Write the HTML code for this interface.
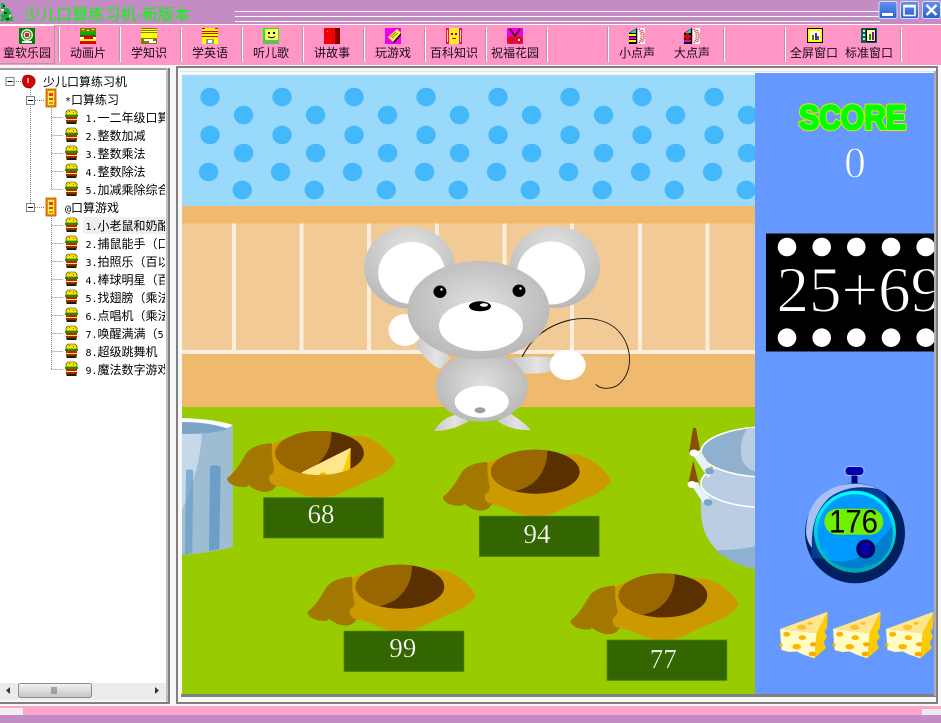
<!DOCTYPE html>
<html><head><meta charset="utf-8"><title>少儿口算练习机</title>
<style>
html,body{margin:0;padding:0;width:941px;height:723px;overflow:hidden;background:#f0f0f0}
svg{display:block;position:absolute;left:0;top:0}
.cj{font-family:"Liberation Sans","WenQuanYi Zen Hei","Noto Sans CJK SC",sans-serif;font-size:12px;fill:#000}
.tb{text-anchor:middle;fill:#1a0a1a}
.m{font-family:"DejaVu Sans Mono","Liberation Mono",monospace;font-size:10px}
.se{font-family:"Liberation Serif",serif;fill:#fff}
</style></head><body>
<svg width="941" height="723" viewBox="0 0 941 723" xmlns="http://www.w3.org/2000/svg">
<defs>
<radialGradient id="g1" cx="50%" cy="30%" r="70%"><stop offset="0" stop-color="#e4e4e4"/><stop offset="1" stop-color="#b8b8b8"/></radialGradient>
<radialGradient id="g2" cx="50%" cy="45%" r="62%"><stop offset="0" stop-color="#e0e0e0"/><stop offset="1" stop-color="#b4b4b4"/></radialGradient>
<linearGradient id="g3" x1="0" y1="0" x2="1" y2="0"><stop offset="0" stop-color="#c8c8c8"/><stop offset=".6" stop-color="#e4e4e4"/><stop offset="1" stop-color="#cccccc"/></linearGradient>
<linearGradient id="gb" x1="0" y1="0" x2="0" y2="1"><stop offset="0" stop-color="#5f93ec"/><stop offset="1" stop-color="#2a5fd0"/></linearGradient>
<linearGradient id="gs" x1="0" y1="0" x2="0" y2="1"><stop offset="0" stop-color="#f4f4f4"/><stop offset="1" stop-color="#c4c4c4"/></linearGradient>
<linearGradient id="gc" x1="0" y1="0" x2="0" y2="1"><stop offset="0" stop-color="#00ffff"/><stop offset="1" stop-color="#00a8a8"/></linearGradient>
<clipPath id="gameclip"><rect x="182" y="73" width="573" height="621"/></clipPath>
<clipPath id="rightclip"><rect x="755" y="73" width="179" height="621"/></clipPath>
<clipPath id="treeclip"><rect x="0" y="70" width="165" height="612"/></clipPath>
<clipPath id="holeE"><ellipse cx="56.3" cy="-44.3" rx="44.3" ry="22"/></clipPath>
<clipPath id="cheeseHole"><ellipse cx="319.6" cy="453" rx="44.3" ry="22"/></clipPath>

<g id="hole">
<path d="M-36-19.3C-30-24-25-30-17-44.3C-10-52-2-53 8-54.3L20-20L9.7-7.7C3-3-8-6-15.3-12.7C-15-10-18-10-22-10.3C-28-10.5-37-14-36-19.3Z" fill="#a37800"/>
<path d="M8.7-52.7C25-62 50-66 72-63C85-61 93-62 99.7-61C115-57 127-45 132.3-35.7C127-26 115-20 103-16C90-10 80-5 69.7-1C60 0 55 1 49.7-.3C42-1 38-3 33-5C25-10 15-11 9.7-12.7C5-15 5-22 8-23C10-24 10.7-27 10.7-29.3C9-36 8-45 8.7-52.7Z" fill="#cc9900"/>
<ellipse cx="56.3" cy="-44.3" rx="44.3" ry="22" fill="#5a3000"/>
<path clip-path="url(#holeE)" d="M0-70H68C70-50 60-30 36.3-25L0-20Z" fill="#996600"/>
</g>

<g id="burger">
<path d="M3 1h7l2 2v3H1V3z" fill="#ffe000" stroke="#303000" stroke-width=".6"/>
<rect x="0" y="6" width="13" height="2" fill="#00a000"/>
<rect x="1" y="8" width="11" height="2" fill="#e01010"/>
<rect x="1" y="10" width="11" height="1" fill="#fff060"/>
<rect x="1" y="11" width="11" height="2" fill="#903000"/>
<path d="M2 13h9l1 1-1 1H2L1 14z" fill="#202000"/>
<rect x="4" y="2" width="1" height="1" fill="#806000"/><rect x="8" y="3" width="1" height="1" fill="#806000"/>
</g>

<g id="folder">
<rect x="0" y="0" width="10" height="18" fill="#ff8800" stroke="#905000" stroke-width=".7"/>
<rect x="2" y="2" width="6" height="14" fill="#ffee50"/>
<rect x="3" y="4" width="4" height="3" fill="#e04020"/>
<rect x="3" y="9" width="4" height="2" fill="#e04020"/>
<rect x="3" y="13" width="4" height="2" fill="#d0a000"/>
</g>

<g id="minus"><rect x=".5" y=".5" width="8" height="8" fill="#fff" stroke="#808080"/><rect x="2" y="4" width="5" height="1" fill="#000"/></g>

<g id="cheese">
<path d="M780 629L827.7 611.7L816.7 633.3Z" fill="#ffe68a"/>
<path d="M780 629L816.7 633.3L814.3 658.3L803 654.5L797 651.5L789 652L781.5 650Z" fill="#fffcc4"/>
<path d="M827.7 611.7L816.7 633.3L814.3 658.3L826 648L823.5 642L827 637L824.5 631.5L827 628Z" fill="#ffcc00"/>
<ellipse cx="801.7" cy="627.3" rx="4.7" ry="2.7" fill="#ffc030"/>
<ellipse cx="810" cy="623.3" rx="2.7" ry="1.5" fill="#ffc030"/>
<ellipse cx="786.7" cy="634.3" rx="3.5" ry="2.4" fill="#ffb400"/>
<ellipse cx="802.3" cy="637.7" rx="3.7" ry="2.4" fill="#ffb400"/>
<ellipse cx="796.7" cy="646.7" rx="4.3" ry="2.7" fill="#ffb400"/>
<ellipse cx="813.3" cy="644.3" rx="3.4" ry="2.1" fill="#ffa800"/>
<ellipse cx="812.3" cy="654" rx="3.7" ry="2.4" fill="#ffa800"/>
<ellipse cx="781" cy="645" rx="1.5" ry="2" fill="#ffb400"/>
</g>
</defs>

<!-- title bar -->
<rect x="0" y="0" width="941" height="25" fill="#c48cc4"/>
<rect x="235" y="11" width="645" height="1" fill="#fff"/>
<rect x="235" y="16" width="645" height="1" fill="#fff"/>
<rect x="235" y="21" width="645" height="1" fill="#fff"/>
<rect x="0" y="24" width="941" height="1" fill="#fff"/>
<!-- dragon icon -->
<path d="M1 3h3l1 5h3l2 3 2 2-2 1 3 3-1 3 2 1H9l-2 1-3-2-2 2-2-2 2-2-2-3 3-1 1-3-3-2z" fill="#19b040"/>
<path d="M3 5h2v2H3zM4 12h3v2H4zM6 18h3v2H6z" fill="#003a10"/>
<path d="M1 9h3v2H1zM9 15h2v2H9z" fill="#c8f0c8"/>
<text x="24" y="20" font-family="'Liberation Sans','WenQuanYi Zen Hei','Noto Sans CJK SC',sans-serif" font-size="16" fill="#00ff00" textLength="166">少儿口算练习机-新版本</text>
<!-- window buttons -->
<g>
<rect x="879" y="1.5" width="18" height="17" rx="2" fill="url(#gb)" stroke="#cfe0ff"/>
<rect x="882" y="13" width="11" height="3" fill="#fff"/>
<rect x="900.5" y="1.5" width="18" height="17" rx="2" fill="url(#gb)" stroke="#cfe0ff"/>
<rect x="904" y="5.5" width="11" height="10" fill="none" stroke="#fff" stroke-width="1.6"/><rect x="904" y="5" width="11" height="2.5" fill="#fff"/>
<rect x="922.5" y="1.5" width="18" height="17" rx="2" fill="url(#gb)" stroke="#cfe0ff"/>
<path d="M926.5 5L936.5 15M936.5 5L926.5 15" stroke="#fff" stroke-width="2.4"/>
</g>

<!-- toolbar -->
<rect x="0" y="25" width="941" height="41" fill="#ff96c6"/>
<path d="M0 25.500H54.500V63.500H0" fill="none" stroke="#a0a0a0"/>
<rect x="0" y="25" width="54" height="1" fill="#fff"/>
<g fill="#fff">
<rect x="59" y="27" width="1" height="35"/><rect x="120" y="27" width="1" height="35"/><rect x="181" y="27" width="1" height="35"/><rect x="242" y="27" width="1" height="35"/><rect x="303" y="27" width="1" height="35"/><rect x="364" y="27" width="1" height="35"/><rect x="425" y="27" width="1" height="35"/><rect x="486" y="27" width="1" height="35"/><rect x="547" y="27" width="1" height="35"/><rect x="608" y="27" width="1" height="35"/><rect x="724" y="27" width="1" height="35"/><rect x="785" y="27" width="1" height="35"/><rect x="901" y="27" width="1" height="35"/>
</g>
<g fill="#a8a0a8">
<rect x="58" y="27" width="1" height="35"/><rect x="119" y="27" width="1" height="35"/><rect x="180" y="27" width="1" height="35"/><rect x="241" y="27" width="1" height="35"/><rect x="302" y="27" width="1" height="35"/><rect x="363" y="27" width="1" height="35"/><rect x="424" y="27" width="1" height="35"/><rect x="485" y="27" width="1" height="35"/><rect x="546" y="27" width="1" height="35"/><rect x="607" y="27" width="1" height="35"/><rect x="723" y="27" width="1" height="35"/><rect x="784" y="27" width="1" height="35"/><rect x="900" y="27" width="1" height="35"/>
</g>

<!-- toolbar icons -->
<g transform="translate(19,28)"><rect width="16" height="16" fill="#008000"/><circle cx="8" cy="7" r="6" fill="#e8f0e8"/><circle cx="8" cy="7" r="4" fill="none" stroke="#008000"/><rect x="6" y="5" width="4" height="4" fill="#e02020"/><rect x="3" y="13" width="10" height="2" fill="#fff"/></g>
<g transform="translate(80,28)"><rect width="16" height="4" fill="#808000"/><rect x="2" y="1" width="2" height="1" fill="#ffff00"/><rect x="7" y="2" width="2" height="1" fill="#ffff00"/><rect x="12" y="1" width="2" height="1" fill="#ffff00"/><rect y="4" width="16" height="3" fill="#00b000"/><rect y="7" width="16" height="2" fill="#804000"/><rect y="9" width="16" height="2" fill="#ffffff"/><rect x="4" y="8" width="9" height="3" fill="#e00000"/><rect y="11" width="16" height="2" fill="#ffff00"/><rect y="13" width="16" height="3" fill="#e00000"/></g>
<g transform="translate(141,28)"><rect width="16" height="5" fill="#808000"/><rect y="1" width="16" height="1" fill="#ffff00"/><rect y="3" width="16" height="1" fill="#ffff60"/><rect y="5" width="16" height="5" fill="#ffff00"/><rect y="10" width="16" height="6" fill="#808000"/><rect x="3" y="11" width="9" height="2" fill="#fff"/><rect x="8" y="13" width="7" height="2" fill="#fff"/></g>
<g transform="translate(202,28)"><rect width="16" height="16" fill="#ffff00"/><rect y="3" width="16" height="1" fill="#e00000"/><rect y="5" width="16" height="1" fill="#e00000"/><rect y="8" width="16" height="1" fill="#e00000"/><rect x="0" y="0" width="3" height="1" fill="#e00000"/><rect x="13" y="0" width="3" height="1" fill="#e00000"/><rect x="4" y="11" width="8" height="5" fill="#80a080"/><rect x="6" y="12" width="4" height="3" fill="#fff"/></g>
<g transform="translate(263,28)"><rect width="16" height="12" fill="#00ff00"/><rect x="2" y="1" width="13" height="11" fill="#ffff60"/><rect x="5" y="4" width="2" height="2" fill="#000"/><rect x="10" y="4" width="2" height="2" fill="#000"/><path d="M5 8.500Q8.500 11 12 8.500" stroke="#000" fill="none"/><rect y="12" width="16" height="4" fill="#60c060"/></g>
<g transform="translate(324,28)"><rect width="16" height="16" fill="#f00000"/><rect x="11" width="5" height="16" fill="#800000"/><rect x="3" y="3" width="1" height="1" fill="#ffa0a0"/></g>
<g transform="translate(385,28)"><rect width="16" height="16" fill="#f000f0"/><path d="M3 9L12 1L16 5L8 14Z" fill="#ffff40"/><path d="M5 9L11 4M7 10L13 5" stroke="#808000"/><path d="M8 14L16 5V7L9 15Z" fill="#000"/></g>
<g transform="translate(446,28)"><rect width="16" height="16" fill="#f000a0"/><rect x="3" width="10" height="16" fill="#ffee20"/><rect x="5" y="5" width="2" height="2" fill="#a00000"/><rect x="9" y="5" width="2" height="2" fill="#a00000"/><rect x="6" y="10" width="4" height="1" fill="#e00000"/><rect x="1" y="2" width="1" height="12" fill="#ffee20"/><rect x="14" y="2" width="1" height="12" fill="#ffee20"/></g>
<g transform="translate(507,28)"><rect width="16" height="16" fill="#f000f0"/><circle cx="4" cy="12" r="4" fill="#e01010"/><circle cx="12" cy="12" r="4" fill="#e01010"/><path d="M3 1L8 8L13 1" stroke="#600000" stroke-width="2" fill="none"/><rect x="11" y="11" width="2" height="2" fill="#fff"/></g>
<g transform="translate(629,28)"><path d="M0 5L8 0V16H0Z" fill="#000"/><path d="M1 5L7 1V5Z" fill="#00e0e0"/><rect x="0" y="6" width="7" height="2" fill="#ffff00"/><rect x="0" y="9" width="7" height="2" fill="#e000e0"/><rect x="0" y="12" width="7" height="2" fill="#ffff00"/><rect x="9" width="7" height="16" fill="#fff"/><path d="M10 1Q15 8 10 15M13 2Q17 8 13 14" stroke="#d03030" stroke-dasharray="1 1" stroke-width="2" fill="none"/></g>
<g transform="translate(684,28)"><path d="M0 5L8 0V16H0Z" fill="#000"/><path d="M1 5L7 1V5Z" fill="#00e0e0"/><rect x="0" y="7" width="7" height="3" fill="#e00000"/><rect x="2" y="5" width="3" height="7" fill="#e00000"/><rect x="0" y="12" width="7" height="2" fill="#e000e0"/><rect x="9" width="7" height="16" fill="#fff"/><path d="M10 1Q15 8 10 15M13 2Q17 8 13 14" stroke="#d03030" stroke-dasharray="1 1" stroke-width="2" fill="none"/></g>
<g transform="translate(807,28)"><rect width="16" height="15" fill="#000"/><rect x="1" y="1" width="14" height="13" fill="#ffff00"/><rect x="3" y="3" width="10" height="9" fill="#fff"/><rect x="5" y="7" width="2" height="5" fill="#00a000"/><rect x="8" y="5" width="2" height="7" fill="#a000a0"/><rect x="10" y="8" width="2" height="4" fill="#008080"/></g>
<g transform="translate(861,28)"><rect width="16" height="15" fill="#006080"/><rect x="2" y="2" width="2" height="2" fill="#ffff00"/><rect x="2" y="6" width="2" height="2" fill="#ffff00"/><rect x="2" y="10" width="2" height="2" fill="#ffff00"/><rect x="5" y="1" width="10" height="13" fill="#000"/><rect x="6" y="2" width="8" height="11" fill="#ffffa0"/><rect x="8" y="6" width="2" height="6" fill="#00a000"/><rect x="11" y="4" width="2" height="8" fill="#a000a0"/></g>

<g class="cj">
<text class="cj tb" x="27" y="57">童软乐园</text>
<text class="cj tb" x="88" y="57">动画片</text>
<text class="cj tb" x="149" y="57">学知识</text>
<text class="cj tb" x="210" y="57">学英语</text>
<text class="cj tb" x="271" y="57">听儿歌</text>
<text class="cj tb" x="332" y="57">讲故事</text>
<text class="cj tb" x="393" y="57">玩游戏</text>
<text class="cj tb" x="454" y="57">百科知识</text>
<text class="cj tb" x="515" y="57">祝福花园</text>
<text class="cj tb" x="637" y="57">小点声</text>
<text class="cj tb" x="692" y="57">大点声</text>
<text class="cj tb" x="814" y="57">全屏窗口</text>
<text class="cj tb" x="869" y="57">标准窗口</text>
</g>

<!-- panels base -->
<rect x="0" y="65" width="941" height="641" fill="#f6f6f6"/>
<!-- left tree panel -->
<rect x="0" y="70" width="166" height="613" fill="#fff"/>
<rect x="0" y="68" width="170" height="2" fill="#a0a0a0"/>
<rect x="166" y="68" width="2" height="634" fill="#c0c0c0"/>
<rect x="168" y="68" width="2" height="636" fill="#808080"/>
<rect x="0" y="702" width="170" height="2" fill="#808080"/>
<!-- scrollbar -->
<rect x="0" y="683" width="166" height="17" fill="#ececec"/>
<rect x="18.500" y="683.500" width="73" height="14" rx="2" fill="url(#gs)" stroke="#8c8c8c"/>
<path d="M52 687v7M54 687v7M56 687v7" stroke="#666"/>
<path d="M10 687V694L6 690.500Z" fill="#333"/>
<path d="M155 687V694L159 690.500Z" fill="#333"/>

<!-- right panel frame -->
<rect x="177" y="67" width="760" height="636" fill="#f8f8f8" stroke="#808080" stroke-width="2"/>
<rect x="180" y="71" width="755" height="1" fill="#e4e4e4"/>
<rect x="181" y="694" width="755" height="3" fill="#808080"/>
<rect x="934" y="71" width="2" height="625" fill="#b0b0b0"/>

<!-- tree lines -->
<g stroke="#808080" stroke-dasharray="1 1" fill="none">
<path d="M30.500 88V203M14 81.500H22M35 100.500H44M35 207.500H44"/>
<path d="M51.500 108V189.500M51.500 117.500H63M51.500 135.500H63M51.500 153.500H63M51.500 171.500H63M51.500 189.500H63"/>
<path d="M51.500 216V369.500M51.500 225.500H63M51.500 243.500H63M51.500 261.500H63M51.500 279.500H63M51.500 297.500H63M51.500 315.500H63M51.500 333.500H63M51.500 351.500H63M51.500 369.500H63"/>
</g>
<use href="#minus" x="5.500" y="77"/>
<use href="#minus" x="26" y="96"/>
<use href="#minus" x="26" y="203"/>
<!-- apple -->
<path d="M24 76Q28 74 32 76Q36 78 35 83Q33 88 29 88Q24 88 22.500 83Q22 78 24 76Z" fill="#d80000" stroke="#400000" stroke-width=".5"/>
<rect x="27" y="78" width="2" height="5" fill="#ffa0a0"/>
<use href="#folder" x="46" y="89"/>
<use href="#folder" x="46" y="198"/>
<use href="#burger" x="65" y="109"/><use href="#burger" x="65" y="127"/><use href="#burger" x="65" y="145"/><use href="#burger" x="65" y="163"/><use href="#burger" x="65" y="181"/>
<use href="#burger" x="65" y="217"/><use href="#burger" x="65" y="235"/><use href="#burger" x="65" y="253"/><use href="#burger" x="65" y="271"/><use href="#burger" x="65" y="289"/><use href="#burger" x="65" y="307"/><use href="#burger" x="65" y="325"/><use href="#burger" x="65" y="343"/><use href="#burger" x="65" y="361"/>
<rect x="83" y="217" width="82" height="17" fill="#f0f0f0"/>
<g clip-path="url(#treeclip)">
<text class="cj" x="43" y="86">少儿口算练习机</text>
<text class="cj" x="65" y="104"><tspan class="m">*</tspan>口算练习</text>
<text class="cj" x="85.500" y="122"><tspan class="m">1.</tspan>一二年级口算</text>
<text class="cj" x="85.500" y="140"><tspan class="m">2.</tspan>整数加减</text>
<text class="cj" x="85.500" y="158"><tspan class="m">3.</tspan>整数乘法</text>
<text class="cj" x="85.500" y="176"><tspan class="m">4.</tspan>整数除法</text>
<text class="cj" x="85.500" y="194"><tspan class="m">5.</tspan>加减乘除综合</text>
<text class="cj" x="65" y="212"><tspan class="m">@</tspan>口算游戏</text>
<text class="cj" x="85.500" y="230"><tspan class="m">1.</tspan>小老鼠和奶酪</text>
<text class="cj" x="85.500" y="248"><tspan class="m">2.</tspan>捕鼠能手（口算</text>
<text class="cj" x="85.500" y="266"><tspan class="m">3.</tspan>拍照乐（百以内</text>
<text class="cj" x="85.500" y="284"><tspan class="m">4.</tspan>棒球明星（百以</text>
<text class="cj" x="85.500" y="302"><tspan class="m">5.</tspan>找翅膀（乘法</text>
<text class="cj" x="85.500" y="320"><tspan class="m">6.</tspan>点唱机（乘法</text>
<text class="cj" x="85.500" y="338"><tspan class="m">7.</tspan>唤醒满满（<tspan class="m">5</tspan></text>
<text class="cj" x="85.500" y="356"><tspan class="m">8.</tspan>超级跳舞机</text>
<text class="cj" x="85.500" y="374"><tspan class="m">9.</tspan>魔法数字游戏</text>
</g>

<!-- game scene -->
<g clip-path="url(#gameclip)">
<rect x="182" y="75" width="573" height="131" fill="#99d9fc"/>
<g fill="#45b8fb">
<ellipse cx="210" cy="97" rx="9.700" ry="9.300"/><ellipse cx="282" cy="97" rx="9.700" ry="9.300"/><ellipse cx="354" cy="97" rx="9.700" ry="9.300"/><ellipse cx="426" cy="97" rx="9.700" ry="9.300"/><ellipse cx="498" cy="97" rx="9.700" ry="9.300"/><ellipse cx="570" cy="97" rx="9.700" ry="9.300"/><ellipse cx="642" cy="97" rx="9.700" ry="9.300"/><ellipse cx="714" cy="97" rx="9.700" ry="9.300"/>
<ellipse cx="243.600" cy="115" rx="9.700" ry="9.300"/><ellipse cx="315.600" cy="115" rx="9.700" ry="9.300"/><ellipse cx="387.600" cy="115" rx="9.700" ry="9.300"/><ellipse cx="459.600" cy="115" rx="9.700" ry="9.300"/><ellipse cx="531.600" cy="115" rx="9.700" ry="9.300"/><ellipse cx="603.600" cy="115" rx="9.700" ry="9.300"/><ellipse cx="675.600" cy="115" rx="9.700" ry="9.300"/><ellipse cx="747.600" cy="115" rx="9.700" ry="9.300"/>
<ellipse cx="210" cy="135" rx="9.700" ry="9.300"/><ellipse cx="282" cy="135" rx="9.700" ry="9.300"/><ellipse cx="354" cy="135" rx="9.700" ry="9.300"/><ellipse cx="426" cy="135" rx="9.700" ry="9.300"/><ellipse cx="498" cy="135" rx="9.700" ry="9.300"/><ellipse cx="570" cy="135" rx="9.700" ry="9.300"/><ellipse cx="642" cy="135" rx="9.700" ry="9.300"/><ellipse cx="714" cy="135" rx="9.700" ry="9.300"/>
<ellipse cx="243.600" cy="153" rx="9.700" ry="9.300"/><ellipse cx="315.600" cy="153" rx="9.700" ry="9.300"/><ellipse cx="387.600" cy="153" rx="9.700" ry="9.300"/><ellipse cx="459.600" cy="153" rx="9.700" ry="9.300"/><ellipse cx="531.600" cy="153" rx="9.700" ry="9.300"/><ellipse cx="603.600" cy="153" rx="9.700" ry="9.300"/><ellipse cx="675.600" cy="153" rx="9.700" ry="9.300"/><ellipse cx="747.600" cy="153" rx="9.700" ry="9.300"/>
<ellipse cx="208.600" cy="172" rx="9.700" ry="9.300"/><ellipse cx="280.600" cy="172" rx="9.700" ry="9.300"/><ellipse cx="352.600" cy="172" rx="9.700" ry="9.300"/><ellipse cx="424.600" cy="172" rx="9.700" ry="9.300"/><ellipse cx="496.600" cy="172" rx="9.700" ry="9.300"/><ellipse cx="568.600" cy="172" rx="9.700" ry="9.300"/><ellipse cx="640.600" cy="172" rx="9.700" ry="9.300"/><ellipse cx="712.600" cy="172" rx="9.700" ry="9.300"/>
<ellipse cx="242.200" cy="190" rx="9.700" ry="9.300"/><ellipse cx="314.200" cy="190" rx="9.700" ry="9.300"/><ellipse cx="386.200" cy="190" rx="9.700" ry="9.300"/><ellipse cx="458.200" cy="190" rx="9.700" ry="9.300"/><ellipse cx="530.200" cy="190" rx="9.700" ry="9.300"/><ellipse cx="602.200" cy="190" rx="9.700" ry="9.300"/><ellipse cx="674.200" cy="190" rx="9.700" ry="9.300"/><ellipse cx="746.200" cy="190" rx="9.700" ry="9.300"/>
</g>
<rect x="182" y="206" width="573" height="17.500" fill="#efba6d"/>
<rect x="182" y="223.500" width="573" height="127" fill="#f2ca95"/>
<g fill="#fdeedd">
<rect x="232" y="223.500" width="4" height="127"/><rect x="299.500" y="223.500" width="4" height="127"/><rect x="367" y="223.500" width="4" height="127"/><rect x="435" y="223.500" width="4" height="127"/><rect x="502.500" y="223.500" width="4" height="127"/><rect x="570" y="223.500" width="4" height="127"/><rect x="638" y="223.500" width="4" height="127"/><rect x="705.500" y="223.500" width="4" height="127"/>
<rect x="182" y="350" width="573" height="4"/>
</g>
<rect x="182" y="354" width="573" height="53" fill="#efba6d"/>
<rect x="182" y="407" width="573" height="287" fill="#99cc00"/>

<!-- bucket -->
<path d="M182 418Q215 419 232.700 425V547Q210 553 182 555Z" fill="#9fbdd2"/>
<path d="M182 433H202Q200 470 182 510Z" fill="#c5d9ea"/>
<path d="M186 470Q193 468 193.300 472L192.300 553L185 555Z" fill="#6b9fc8" opacity=".75"/>
<path d="M210 466Q216 464 220.700 467L219.300 549L209 551Z" fill="#6b9fc8"/>
<path d="M182 418Q215 419 232.700 425Q225 432 182 434Z" fill="#fff"/>
<path d="M182 422Q210 422 228.300 429Q215 434 182 434Z" fill="#7aa4c8"/>

<!-- pots -->
<path d="M701 480V513Q702 540 723 555Q738 565 760 569V480Z" fill="#bbcde2"/>
<path d="M715 550Q735 551 756 546V569Q735 566 715 550Z" fill="#8fb0cf"/>
<ellipse cx="767" cy="483" rx="66" ry="24.500" fill="#bbcde2" stroke="#fff" stroke-width="1.600"/>
<ellipse cx="767" cy="452" rx="66" ry="25" fill="#8fb0cf" stroke="#fff" stroke-width="1.600"/>
<path d="M748 428Q738 440 742 460Q748 472 760 472V428Z" fill="#bbcde2"/>
<path d="M696 428L700 450L689 453Q691 440 693 428Z" fill="#8a4f05"/>
<path d="M693.300 460.700L698.300 482L688.300 483Z" fill="#8a4f05"/>
<path d="M693 455L700 450L714 472L708 478Z" fill="#e8f0f8"/>
<path d="M692 486L697 482L713 502L705 506Z" fill="#e8f0f8"/>
<ellipse cx="694" cy="453" rx="4.500" ry="3.500" fill="#fff"/>
<ellipse cx="692" cy="484.500" rx="4.500" ry="3.500" fill="#fff"/>
<ellipse cx="709.500" cy="471" rx="4.500" ry="3.500" fill="#7ba6cc"/>
<ellipse cx="708" cy="502.500" rx="4.500" ry="3.500" fill="#7ba6cc"/>

<!-- holes -->
<use href="#hole" x="263.300" y="497.300"/>
<use href="#hole" x="479" y="516"/>
<use href="#hole" x="343.700" y="631"/>
<use href="#hole" x="606.700" y="639.700"/>
<g clip-path="url(#cheeseHole)">
<path d="M300.700 472.700L350.700 447.700L350 476L320 480Z" fill="#ffe68a"/>
<path d="M350.700 447.700L350 472L342.500 472Z" fill="#ffcc00"/>
<ellipse cx="323" cy="475" rx="3.500" ry="2.500" fill="#ffb000"/>
</g>
<g fill="#336600" stroke="#3f7a00">
<rect x="263.800" y="497.800" width="119.500" height="40"/>
<rect x="479.500" y="516.300" width="119.500" height="40"/>
<rect x="344.200" y="631.300" width="119.500" height="40"/>
<rect x="607.200" y="640.200" width="119.500" height="40"/>
</g>
<g font-size="27" text-anchor="middle" stroke="#336600" stroke-width=".3">
<text class="se" x="321" y="523">68</text>
<text class="se" x="537" y="543">94</text>
<text class="se" x="402.700" y="657">99</text>
<text class="se" x="663.300" y="668">77</text>
</g>

<!-- mouse -->
<path d="M521.700 358C530 340 545 326 570 320C590 316 610 320 620 333C632 347 634 372 618 385C610 390 600 389 595.700 384.300" fill="none" stroke="#111" stroke-width=".9"/>
<ellipse cx="409.500" cy="267.500" rx="45.500" ry="41" fill="url(#g1)"/>
<ellipse cx="411.700" cy="273" rx="33.500" ry="31" fill="#fff"/>
<ellipse cx="555" cy="267" rx="45" ry="41" fill="url(#g1)"/>
<ellipse cx="551" cy="273" rx="34" ry="31.500" fill="#fff"/>
<path d="M415 343L426 335L451 358L440 369Q425 362 415 343Z" fill="url(#g3)"/>
<ellipse cx="405" cy="330" rx="16.500" ry="16" fill="#fff"/>
<path d="M511 358Q535 355 555 358V371Q535 375 522 373Z" fill="url(#g3)"/>
<path d="M434 431Q442 418 455 415L469 421Q452 431 434 431Z" fill="url(#g3)"/>
<path d="M497 421L511 414Q525 423 531 430Q512 431 497 421Z" fill="url(#g3)"/>
<ellipse cx="481.700" cy="386.700" rx="46" ry="35" fill="url(#g2)"/>
<ellipse cx="481.700" cy="401.700" rx="27" ry="16" fill="#fff"/>
<ellipse cx="480" cy="410.300" rx="5.500" ry="3" fill="#a0a0a0"/>
<ellipse cx="478.500" cy="310" rx="71" ry="49" fill="url(#g2)"/>
<ellipse cx="481" cy="326" rx="42" ry="25" fill="#fff"/>
<ellipse cx="440" cy="291.700" rx="6.500" ry="6.200" fill="#000"/>
<circle cx="441.500" cy="289.500" r="1.200" fill="#fff"/>
<ellipse cx="519" cy="290.700" rx="6.500" ry="6.200" fill="#000"/>
<circle cx="520.500" cy="288.500" r="1.200" fill="#fff"/>
<ellipse cx="480" cy="306.300" rx="11" ry="5" fill="#000"/>
<ellipse cx="484" cy="305" rx="4" ry="1.700" fill="#fff"/>
<ellipse cx="567.700" cy="365" rx="18" ry="15" fill="#fff"/>
</g>

<!-- right panel -->
<rect x="755" y="73" width="179" height="621" fill="#6699ff"/>
<g font-family="'Liberation Sans',sans-serif" font-weight="bold" font-size="34">
<text x="799" y="129" textLength="107" lengthAdjust="spacingAndGlyphs" fill="#e6e600" stroke="#e6e600" stroke-width="4" stroke-linejoin="round">SCORE</text>
<text x="799" y="129" textLength="107" lengthAdjust="spacingAndGlyphs" fill="#00ff00" stroke="#00ff00" stroke-width="2" stroke-linejoin="round">SCORE</text>
</g>
<text class="se" x="855" y="177" font-size="43" text-anchor="middle" stroke="#6699ff" stroke-width=".8">0</text>

<g clip-path="url(#rightclip)">
<rect x="766" y="233.500" width="170" height="118" fill="#000"/>
<g fill="#fff">
<circle cx="787" cy="247" r="9.300"/><circle cx="821.700" cy="247" r="9.300"/><circle cx="856.300" cy="247" r="9.300"/><circle cx="891" cy="247" r="9.300"/><circle cx="925.700" cy="247" r="9.300"/>
<circle cx="787" cy="337.700" r="9.300"/><circle cx="821.700" cy="337.700" r="9.300"/><circle cx="856.300" cy="337.700" r="9.300"/><circle cx="891" cy="337.700" r="9.300"/><circle cx="925.700" cy="337.700" r="9.300"/>
</g>
<text class="se" x="776.500" y="311.500" font-size="65" stroke="#000" stroke-width="1">25+69</text>
</g>

<!-- timer -->
<rect x="845" y="466.500" width="19" height="9" rx="4" fill="#0000b0" stroke="#a8c0ff"/>
<rect x="851.500" y="475.500" width="6" height="8" fill="#000080"/>
<circle cx="855" cy="533.300" r="50" fill="#002060"/>
<path d="M812 558Q808 510 835 488Q860 480 882 491Q890 500 888 512Q884 555 840 560Z" fill="#003d99"/>
<path d="M806 533Q806 497 838 486Q860 480 878 489Q850 483 830 497Q810 515 812 548Q807 542 806 533Z" fill="#a8c0f5"/>
<circle cx="855" cy="531.700" r="41" fill="url(#gc)"/>
<circle cx="855" cy="531.700" r="37.500" fill="#0099ff"/>
<path d="M829 560Q850 566 870 550Q885 537 892 525Q896 550 877 563Q850 575 829 560Z" fill="#0080cc"/>
<rect x="824.300" y="508.700" width="59" height="26" rx="13" fill="#70f000"/>
<text x="829" y="532.700" font-family="'Liberation Sans',sans-serif" font-size="32" fill="#000" textLength="49" lengthAdjust="spacingAndGlyphs">176</text>
<circle cx="865.700" cy="549" r="9.500" fill="#000060"/>
<circle cx="865.700" cy="549" r="6" fill="#0000a8"/>

<!-- cheeses -->
<use href="#cheese"/>
<use href="#cheese" x="53"/>
<use href="#cheese" x="106"/>

<!-- bottom bars -->
<rect x="0" y="706" width="941" height="9" fill="#ffa4cc"/>
<rect x="0" y="715" width="941" height="8" fill="#c48cc4"/>
<rect x="0" y="708" width="23" height="7" fill="#f0f0f0"/>
<rect x="922" y="709" width="19" height="6" fill="#ececec"/>
</svg>
</body></html>
